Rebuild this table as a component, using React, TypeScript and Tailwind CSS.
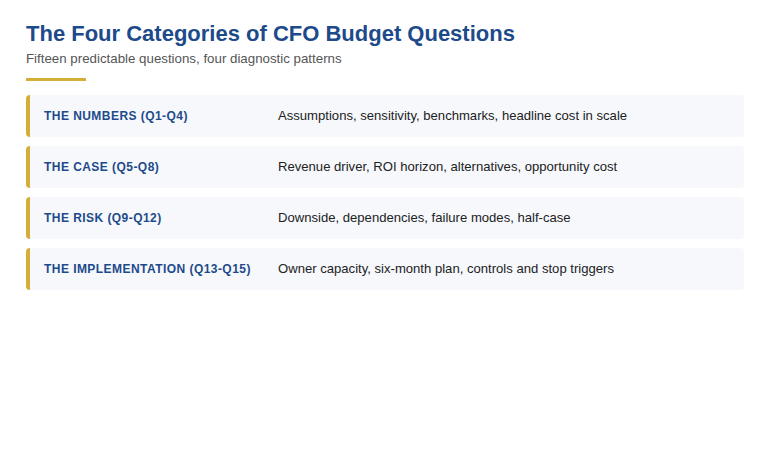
const rows = [
  { label: 'The Numbers (Q1-Q4)', text: 'Assumptions, sensitivity, benchmarks, headline cost in scale' },
  { label: 'The Case (Q5-Q8)', text: 'Revenue driver, ROI horizon, alternatives, opportunity cost' },
  { label: 'The Risk (Q9-Q12)', text: 'Downside, dependencies, failure modes, half-case' },
  { label: 'The Implementation (Q13-Q15)', text: 'Owner capacity, six-month plan, controls and stop triggers' },
];

export default function App() {
  return (
    <div className="w-[770px] h-[450px] bg-white px-[26px] pt-[21px] font-['Liberation_Sans',Arial,sans-serif]">
      <h1 className="text-[22px] leading-[26px] font-bold text-[#1d4a8a]">
        The Four Categories of CFO Budget Questions
      </h1>
      <p className="mt-[4px] text-[13.3px] leading-[16px] text-[#555]">
        Fifteen predictable questions, four diagnostic patterns
      </p>
      <div className="mt-[11px] w-[60px] h-[3px] bg-[#d4ae36]" />
      <div className="mt-[14px] flex flex-col gap-[9px] w-[718px]">
        {rows.map((r) => (
          <div
            key={r.label}
            className="flex items-center h-[42px] rounded-[4px] border-l-4 border-[#d4ae36] bg-[#f6f8fc]"
          >
            <div className="w-[248px] pl-[14px] text-[12px] font-bold uppercase tracking-[0.45px] text-[#1d4a8a]">
              {r.label}
            </div>
            <div className="text-[13.1px] text-[#222]">{r.text}</div>
          </div>
        ))}
      </div>
    </div>
  );
}
